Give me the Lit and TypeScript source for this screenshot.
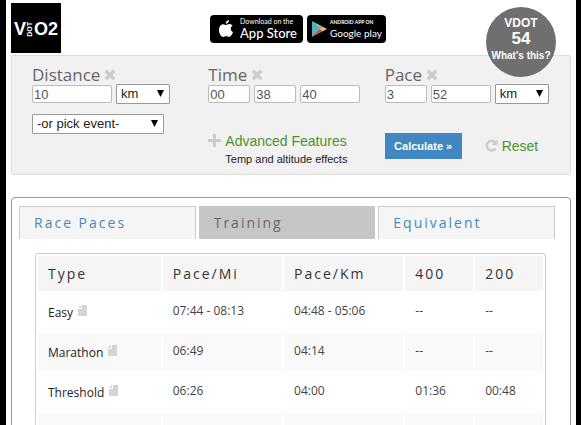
import { LitElement, html, css, svg } from "lit";
import { customElement, property, state } from "lit/decorators.js";
import { classMap } from "lit/directives/class-map.js";

const rows = [
  ["Easy", "07:44 - 08:13", "04:48 - 05:06", "--", "--"],
  ["Marathon", "06:49", "04:14", "--", "--"],
  ["Threshold", "06:26", "04:00", "01:36", "00:48"],
  ["", "", "", "", ""],
];

const clearIcon = html`<svg class="icon" width="12" height="12" viewBox="0 0 12 12" aria-hidden="true">
  <path d="M1.800 1.800 10.200 10.200M10.200 1.800 1.800 10.200" stroke="currentColor" stroke-width="3.400" />
</svg>`;

const caret = svg`<path d="M0 0H7L3.5 7Z" fill="#000" />`;

@customElement("pick-list")
class PickList extends LitElement {
  @property({ type: Array }) options: string[] = [];
  @property() label = "";

  static styles = css`
    :host {
      display: inline-flex;
      position: relative;
      height: 20px;
    }
    .select {
      appearance: none;
      width: 100%;
      height: 20px;
      box-sizing: border-box;
      margin: 0;
      padding: 0 16px 0 4px;
      border: 1px solid #999;
      border-radius: 1px;
      background: #fff;
      color: #222;
      font: 13px/18px "Liberation Sans", Arial, sans-serif;
    }
    .caret {
      position: absolute;
      right: 6px;
      top: 6px;
      pointer-events: none;
    }
  `;

  render() {
    return html`<select class="select" aria-label=${this.label}>
        ${this.options.map((o) => html`<option>${o}</option>`)}
      </select>
      <svg class="caret" width="7" height="7" viewBox="0 0 7 7" aria-hidden="true">${caret}</svg>`;
  }
}

@customElement("app-root")
class AppRoot extends LitElement {
  @state() tab = "Training";

  static styles = css`
    :host {
      display: block;
      height: 100vh;
      overflow: hidden;
      background: #fff;
      border: solid #000;
      border-width: 0 5px 0 6px;
      box-sizing: border-box;
      font-family: "Liberation Sans", Arial, sans-serif;
      color: #333;
    }
    .page {
      padding: 3px 5px 0;
    }
    .header {
      position: relative;
      display: flex;
      justify-content: space-between;
      height: 52px;
    }
    .logo {
      display: flex;
      align-items: center;
      justify-content: center;
      width: 50px;
      height: 50px;
      padding-top: 2px;
      box-sizing: border-box;
      background: #000;
      color: #fff;
      font-size: 18px;
      font-weight: bold;
      text-decoration: none;
    }
    .logo-dot {
      writing-mode: vertical-rl;
      transform: rotate(180deg);
      font-size: 7px;
      line-height: 8px;
    }
    .stores {
      display: flex;
      gap: 4px;
      padding-top: 12px;
      margin-right: 185px;
    }
    .store {
      display: flex;
      align-items: center;
      height: 28px;
      box-sizing: border-box;
      border-radius: 4px;
      background: #000;
      color: #fff;
      text-decoration: none;
      white-space: nowrap;
      font-family: Lato, sans-serif;
    }
    .apple {
      width: 93px;
      padding-left: 8px;
      gap: 6px;
    }
    .google {
      width: 79px;
      padding-left: 4px;
      gap: 3px;
    }
    .small,
    .large {
      display: block;
    }
    .apple .small {
      font-size: 7px;
      line-height: 9px;
    }
    .apple .large {
      font-size: 12px;
      line-height: 15px;
      font-weight: bold;
    }
    .apple .large {
      font-size: 13px;
      line-height: 15px;
      font-weight: 500;
    }
    .google .small {
      font-size: 5px;
      line-height: 7px;
      font-weight: bold;
    }
    .google .large {
      font-size: 10px;
      line-height: 14px;
    }
    .score {
      position: absolute;
      z-index: 1;
      right: 15px;
      top: 4px;
      width: 70px;
      height: 70px;
      box-sizing: border-box;
      padding-top: 9px;
      border-radius: 50%;
      background: #6f6f6f;
      color: #fff;
      text-align: center;
      font-weight: bold;
      white-space: nowrap;
    }
    .score-name {
      font-size: 12px;
      line-height: 14px;
    }
    .score-value {
      font-size: 17px;
      line-height: 17px;
    }
    .score-link {
      display: block;
      color: #fff;
      font-size: 10px;
      line-height: 18px;
      text-decoration: none;
    }
    .calculator {
      display: grid;
      grid-template-columns: repeat(3, 1fr);
      row-gap: 10px;
      height: 120px;
      box-sizing: border-box;
      padding: 10px 9px 0 20px;
      border: 1px solid #ddd;
      border-radius: 2px;
      background: #f1f1f1;
      align-content: start;
    }
    .title {
      display: flex;
      align-items: center;
      gap: 4px;
      height: 18px;
      color: #666;
      font: 17px/20px "Open Sans", sans-serif;
    }
    .clear {
      display: flex;
      padding: 0;
      border: 0;
      background: none;
      color: #ccc;
    }
    .fields {
      display: flex;
      align-items: center;
      gap: 4px;
      height: 20px;
    }
    .field {
      width: 42px;
      height: 18px;
      box-sizing: border-box;
      margin: 0;
      padding: 0 1px;
      border: 1px solid #bbb;
      border-radius: 2px;
      background: #fff;
      color: #555;
      font: 13px/16px "Liberation Sans", Arial, sans-serif;
    }
    .field.medium {
      width: 60px;
    }
    .field.wide {
      width: 80px;
    }
    .unit {
      width: 54px;
    }
    .event {
      width: 132px;
    }
    .advanced {
      padding-top: 17px;
    }
    .advanced-line,
    .reset {
      display: flex;
      align-items: center;
      gap: 4px;
      color: #4b9130;
      font-size: 14px;
      line-height: 20px;
      text-decoration: none;
    }
    .icon {
      display: block;
      color: #ccc;
    }
    .note {
      padding-left: 17px;
      color: #222;
      font-size: 11px;
      line-height: 16px;
    }
    .actions {
      display: flex;
      align-items: center;
      align-self: start;
      gap: 23px;
      padding-top: 19px;
    }
    .calculate {
      width: 77px;
      height: 26px;
      padding: 0;
      border: 0;
      background: #4187c1;
      color: #fff;
      font: bold 11px/24px "Liberation Sans", Arial, sans-serif;
    }
    .reset {
      padding: 0;
      border: 0;
      background: none;
      font-family: inherit;
    }
    .results {
      margin-top: 22px;
      padding: 8px 15px 20px 7px;
      border: 1px solid #999;
      border-radius: 4px;
    }
    .tabs {
      display: flex;
      gap: 3px;
    }
    .tab {
      flex: 1;
      height: 33px;
      padding: 0 14px;
      border: 1px solid #ccc;
      border-bottom: 0;
      background: #f5f5f5;
      color: #4489bd;
      text-align: left;
      font: 14px/32px "Open Sans", sans-serif;
      letter-spacing: 2px;
    }
    .tab.active {
      border-color: #c6c6c6;
      background: #c6c6c6;
      color: #666;
    }
    .sheet {
      margin: 14px 9px 0 16px;
      border: 1px solid #ccc;
      border-radius: 3px;
    }
    .table {
      width: 100%;
      table-layout: fixed;
      border-spacing: 2px;
      font: 12px/18px "Open Sans", sans-serif;
    }
    .type {
      width: 24.7%;
    }
    .pace {
      width: 24%;
    }
    .head {
      height: 35px;
      padding: 0 10px;
      background: #f5f5f5;
      text-align: left;
      font-size: 14px;
      font-weight: 400;
      letter-spacing: 2px;
    }
    .cell {
      height: 38px;
      box-sizing: border-box;
      padding: 9px 10px 0;
      text-align: left;
      vertical-align: top;
      font-weight: 400;
      color: #444;
    }
    .cell.name {
      padding-top: 11px;
      color: #222;
    }
    .row:nth-child(even) .cell {
      background: #f9f9f9;
    }
    .doc {
      margin-left: 2px;
    }
  `;

  private title(text: string, id: string) {
    return html`<div class="title">
      <label for=${id}>${text}</label>
      <button class="clear" type="button" aria-label="Clear ${text}">${clearIcon}</button>
    </div>`;
  }

  render() {
    return html`<div class="page">
      <header class="header">
        <a class="logo" href="#" aria-label="VDOT O2">
          <span>V</span><span class="logo-dot">DOT</span><span>O2</span>
        </a>
        <nav class="stores">
          <a class="store apple" href="#">
            <svg width="16" height="20" viewBox="0 0 16 20" fill="#fff" aria-hidden="true">
              <path d="M11 1c.1 2-1.400 3.700-3.300 3.800C7.500 3 9.200 1.200 11 1Z" />
              <path d="M8 6c.8 0 1.900-1 3.500-.9 1.400.1 2.400.7 3 1.600-2.600 1.700-2.200 5 .5 6.200-.7 2.200-2.200 5-4 5.100-1.100 0-1.500-.7-2.900-.7s-1.900.7-2.900.7C3 18 1 14.300 1 11c0-3.700 2.100-5.800 4.300-5.800C6.500 5.200 7.400 6 8 6Z" />
            </svg>
            <span><span class="small">Download on the</span><span class="large">App Store</span></span>
          </a>
          <a class="store google" href="#">
            <svg width="16" height="18" viewBox="0 0 16 18" aria-hidden="true">
              <path d="M1 1 10 9 1 17Z" fill="#55b3bd" />
              <path d="M1 1 11.500 6.500 8.500 9Z" fill="#79bfa6" />
              <path d="M1 17 11.500 11.500 8.500 9Z" fill="#c4584f" />
              <path d="M11.500 6.500 16 9 11.500 11.500 8.500 9Z" fill="#e5b58a" />
            </svg>
            <span><span class="small">ANDROID APP ON</span><span class="large">Google play</span></span>
          </a>
        </nav>
        <div class="score">
          <div class="score-name">VDOT</div>
          <div class="score-value">54</div>
          <a class="score-link" href="#">What's this?</a>
        </div>
      </header>

      <form class="calculator" @submit=${(e: Event) => e.preventDefault()}>
        <div>
          ${this.title("Distance", "distance")}
          <div class="fields">
            <input class="field wide" id="distance" value="10" />
            <pick-list class="unit" label="Distance unit" .options=${["km", "mi"]}></pick-list>
          </div>
        </div>
        <div>
          ${this.title("Time", "hours")}
          <div class="fields">
            <input class="field" id="hours" value="00" />
            <input class="field" aria-label="Minutes" value="38" />
            <input class="field medium" aria-label="Seconds" value="40" />
          </div>
        </div>
        <div>
          ${this.title("Pace", "pace")}
          <div class="fields">
            <input class="field" id="pace" value="3" />
            <input class="field medium" aria-label="Pace seconds" value="52" />
            <pick-list class="unit" label="Pace unit" .options=${["km", "mi"]}></pick-list>
          </div>
        </div>
        <div>
          <pick-list class="event" label="Event" .options=${["-or pick event-"]}></pick-list>
        </div>
        <div class="advanced">
          <a class="advanced-line" href="#">
            <svg class="icon" width="13" height="14" viewBox="0 0 13 14" aria-hidden="true">
              <path d="M6.500 0V13M0 6.500H13" stroke="currentColor" stroke-width="3" />
            </svg>
            Advanced Features
          </a>
          <div class="note">Temp and altitude effects</div>
        </div>
        <div class="actions">
          <button class="calculate" type="submit">Calculate »</button>
          <button class="reset" type="reset">
            <svg class="icon" width="13" height="14" viewBox="0 0 13 14" aria-hidden="true">
              <path d="M10.500 9.500A4.800 4.800 0 1 1 9.600 3" fill="none" stroke="currentColor" stroke-width="2.400" />
              <path d="M12.500 0V6H6.500Z" fill="currentColor" />
            </svg>
            Reset
          </button>
        </div>
      </form>

      <section class="results">
        <div class="tabs" role="tablist">
          ${["Race Paces", "Training", "Equivalent"].map(
            (name) => html`<button
              class=${classMap({ tab: true, active: name === this.tab })}
              role="tab"
              aria-selected=${name === this.tab}
              @click=${() => (this.tab = name)}
            >${name}</button>`
          )}
        </div>
        <div class="sheet">
          <table class="table">
            <colgroup>
              <col class="type" />
              <col class="pace" />
              <col class="pace" />
              <col />
              <col />
            </colgroup>
            <thead>
              <tr>
                ${["Type", "Pace/Mi", "Pace/Km", "400", "200"].map(
                  (h) => html`<th class="head" scope="col">${h}</th>`
                )}
              </tr>
            </thead>
            <tbody>
              ${rows.map(
                ([name, ...values]) => html`<tr class="row">
                  <th class="cell name" scope="row">
                    ${name}
                    ${name
                      ? html`<svg class="doc" width="9" height="12" viewBox="0 0 9 12" aria-hidden="true">
                          <path d="M4 0H9V11H0V4H4Z" fill="#d4d4d4" />
                          <path d="M3 0V3H0Z" fill="#d4d4d4" />
                        </svg>`
                      : ""}
                  </th>
                  ${values.map((v) => html`<td class="cell">${v}</td>`)}
                </tr>`
              )}
            </tbody>
          </table>
        </div>
      </section>
    </div>`;
  }
}
